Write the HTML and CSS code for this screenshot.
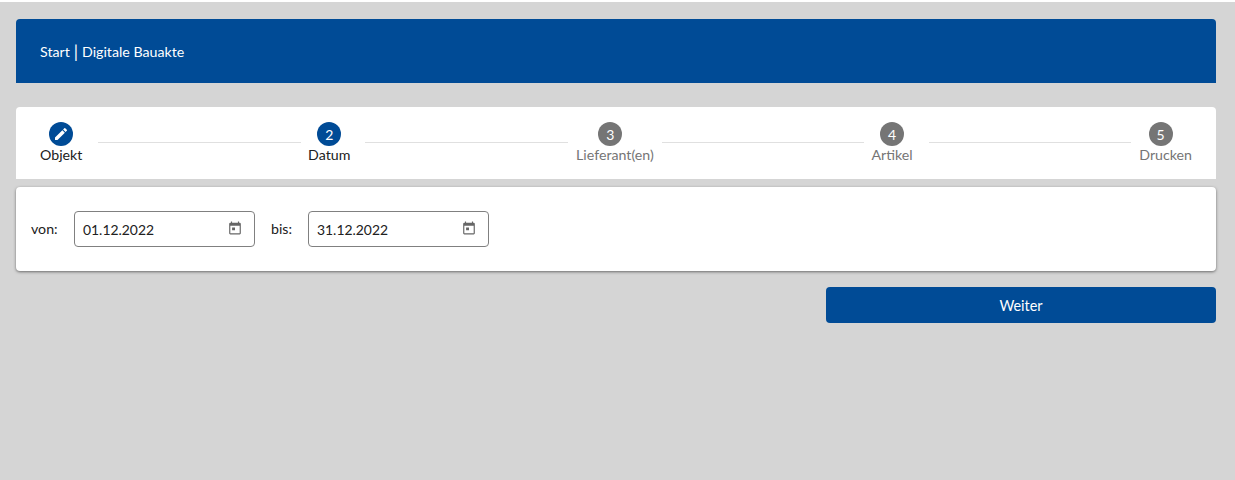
FILE: index.html
```html
<!DOCTYPE html>
<html lang="de">
<head>
    <meta charset="UTF-8">
    <title>Digitale Bauakte</title>
    <link rel="stylesheet" href="styles.css">
</head>
<body>
    <div class="page">
        <div class="header">Start <span class="sep">|</span> Digitale Bauakte</div>

        <div class="stepper">
            <div class="step step-objekt done">
                <div class="circle">
                    <svg viewBox="0 0 24 24" width="16" height="16"><path fill="#fff" d="M3 17.25V21h3.75L17.81 9.94l-3.75-3.75L3 17.25zM20.71 7.04a1 1 0 0 0 0-1.41l-2.34-2.34a1 1 0 0 0-1.41 0l-1.83 1.83 3.75 3.75 1.83-1.83z"/></svg>
                </div>
                <div class="step-label">Objekt</div>
            </div>
            <div class="line"></div>
            <div class="step step-datum done">
                <div class="circle">2</div>
                <div class="step-label">Datum</div>
            </div>
            <div class="line"></div>
            <div class="step step-lieferant">
                <div class="circle">3</div>
                <div class="step-label">Lieferant(en)</div>
            </div>
            <div class="line"></div>
            <div class="step step-artikel">
                <div class="circle">4</div>
                <div class="step-label">Artikel</div>
            </div>
            <div class="line"></div>
            <div class="step step-drucken">
                <div class="circle">5</div>
                <div class="step-label">Drucken</div>
            </div>
        </div>

        <div class="card">
            <span class="field-label label-von">von:</span>
            <div class="date-input">
                <span>01.12.2022</span>
                <svg viewBox="0 0 24 24" width="14" height="14"><path fill="#666" d="M20 3h-1V1h-2v2H7V1H5v2H4a2 2 0 0 0-2 2v16a2 2 0 0 0 2 2h16a2 2 0 0 0 2-2V5a2 2 0 0 0-2-2zm0 18H4V8h16v13zM7 11h5v5H7z"/></svg>
            </div>
            <span class="field-label label-bis">bis:</span>
            <div class="date-input">
                <span>31.12.2022</span>
                <svg viewBox="0 0 24 24" width="14" height="14"><path fill="#666" d="M20 3h-1V1h-2v2H7V1H5v2H4a2 2 0 0 0-2 2v16a2 2 0 0 0 2 2h16a2 2 0 0 0 2-2V5a2 2 0 0 0-2-2zm0 18H4V8h16v13zM7 11h5v5H7z"/></svg>
            </div>
        </div>

        <div class="actions">
            <button type="button" class="next">Weiter</button>
        </div>
    </div>
</body>
</html>
```

FILE: styles.css
```css
html, body {
    height: 100%;
}

body {
    font-family: Lato, Arial, sans-serif;
    font-size: 14.2px;
    margin: 0;
    background-color: #d5d5d5;
    color: #212121;
    overflow: hidden;
    border-top: 2px solid #fff;
    box-sizing: border-box;
}

.page {
    padding: 17px 19px 0 16px;
}

.header {
    height: 64px;
    display: flex;
    align-items: center;
    gap: 4px;
    padding-left: 24px;
    background-color: #004b96;
    color: #fff;
    border-radius: 4px 4px 0 0;
}

.sep {
    font-size: 17px;
}

.stepper {
    height: 72px;
    margin-top: 24px;
    padding: 15px 24px 0;
    box-sizing: border-box;
    display: flex;
    align-items: flex-start;
    background-color: #fff;
    border-radius: 4px 4px 0 0;
}

.step {
    display: flex;
    flex-direction: column;
    align-items: center;
    color: #757575;
    padding: 0 8px;
}

.step.done {
    color: #212121;
}

.step-objekt {
    padding: 0 16px 0 0;
}

.step-datum {
    padding: 0 15px 0 7px;
}

.step-artikel {
    padding: 0 16px 0 7px;
}

.step-drucken {
    padding: 0 0 0 8px;
}

.step-lieferant .circle {
    margin-right: 9px;
}

.step-drucken .circle {
    margin-right: 10px;
}

.circle {
    width: 24px;
    height: 24px;
    border-radius: 50%;
    background-color: #757575;
    color: #fff;
    display: flex;
    align-items: center;
    justify-content: center;
    font-size: 14px;
}

.done .circle {
    background-color: #004b96;
}

.step-label {
    line-height: 18px;
}

.line {
    flex: 1;
    height: 1px;
    margin-top: 20px;
    background-color: #e0e0e0;
}

.card {
    height: 84px;
    margin-top: 8px;
    padding: 24px 16px 0 15px;
    box-sizing: border-box;
    display: flex;
    align-items: flex-start;
    background-color: #fff;
    border-radius: 4px;
    box-shadow: 0 1px 3px rgba(0, 0, 0, 0.5);
}

.field-label {
    line-height: 35px;
    margin-right: 16px;
}

.label-von {
    width: 27px;
}

.label-bis {
    width: 21px;
}

.date-input {
    width: 181px;
    height: 36px;
    margin-right: 16px;
    padding: 0 12px 0 8px;
    box-sizing: border-box;
    display: flex;
    align-items: center;
    justify-content: space-between;
    border: 1px solid #808080;
    border-radius: 4px;
    font-size: 13.9px;
}

.date-input svg {
    margin-bottom: 2px;
}

.actions {
    display: flex;
    justify-content: flex-end;
    margin-top: 16px;
}

.next {
    width: 390px;
    height: 36px;
    border: none;
    border-radius: 4px;
    background-color: #004b96;
    color: #fff;
    font-family: Lato, Arial, sans-serif;
    font-size: 14.4px;
}
```
